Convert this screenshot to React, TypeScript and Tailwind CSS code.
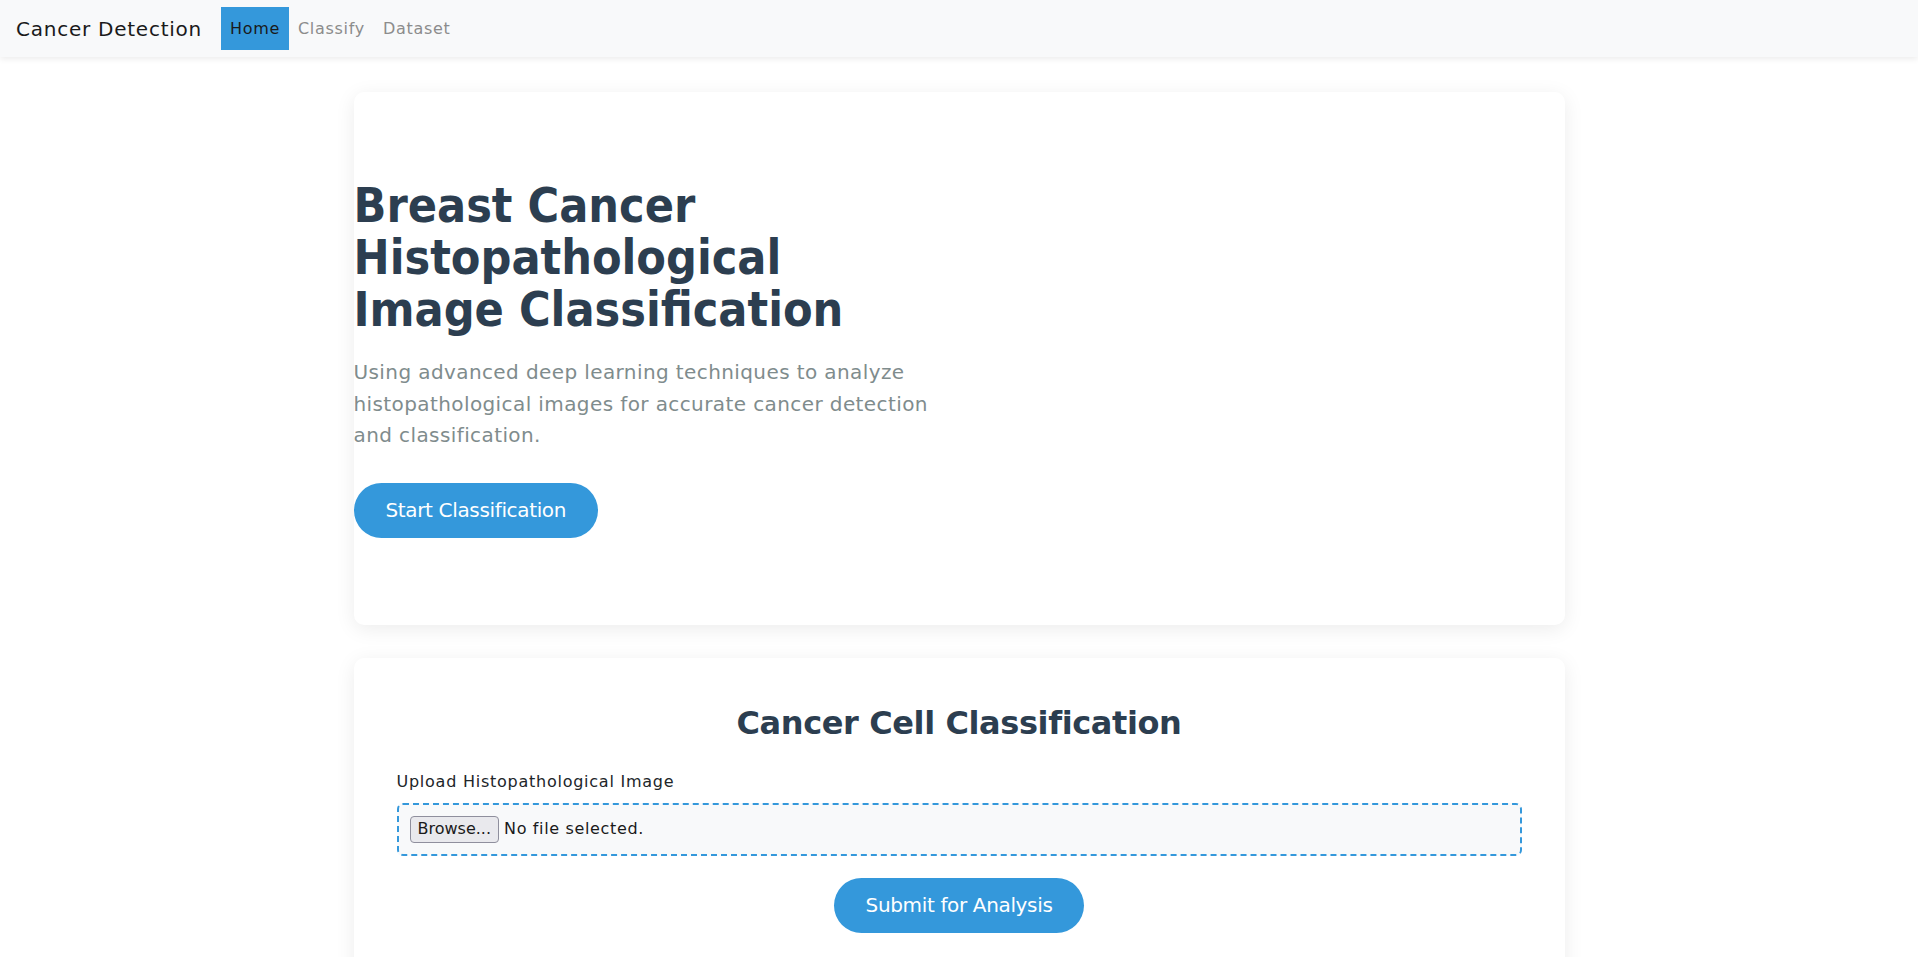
import { useState } from "react";

export default function App() {
    const [fileName, setFileName] = useState<string | null>(null);

    return (
        <div className="min-h-screen bg-white text-[#212529] font-['DejaVu_Sans',sans-serif]">
            {/* Navbar */}
            <nav className="h-[57px] bg-[#f8f9fa] shadow-[0_2px_6px_rgba(0,0,0,0.08)] flex items-center px-4">
                <a href="#" className="text-[20px] tracking-[0.75px] text-[#1a1a1a] mr-[19px]">
                    Cancer Detection
                </a>
                <div className="flex items-center text-[16px] tracking-[0.7px]">
                    <a href="#" className="h-[43px] px-[9px] flex items-center bg-[#3498db] text-[#1a1a1a]">
                        Home
                    </a>
                    <a href="#" className="h-[43px] px-[9px] flex items-center text-[#8c8c8c] hover:text-[#333]">
                        Classify
                    </a>
                    <a href="#" className="h-[43px] px-[9px] flex items-center text-[#8c8c8c] hover:text-[#333]">
                        Dataset
                    </a>
                </div>
            </nav>

            <main className="w-[1211px] mx-auto pt-[35px] flex flex-col gap-[33px]">
                {/* Hero */}
                <section className="bg-white rounded-[10px] shadow-[0_4px_20px_rgba(0,0,0,0.08)] py-[87px] flex">
                    <div className="w-[605px]">
                        <h1 className="max-w-[540px] font-['DejaVu_Sans_Condensed','DejaVu_Sans',sans-serif] text-[48px] leading-[52px] font-bold text-[#2c3e50] mb-[22px]">
                            Breast Cancer Histopathological Image Classification
                        </h1>
                        <p className="text-[20px] leading-[31.5px] tracking-[0.4px] text-[#7f8c8d] mb-[31px]">
                            Using advanced deep learning techniques to analyze histopathological images for accurate cancer detection and classification.
                        </p>
                        <button className="h-[55px] px-8 rounded-full bg-[#3498db] text-white text-[20px] tracking-[-0.35px] hover:bg-[#2980b9]">
                            Start Classification
                        </button>
                    </div>
                </section>

                {/* Classification form */}
                <section className="bg-white rounded-[10px] shadow-[0_4px_20px_rgba(0,0,0,0.08)] px-[43px] pt-[46px] pb-12">
                    <h2 className="text-[32px] leading-[38px] tracking-[-0.4px] font-bold text-[#2c3e50] text-center mb-[28px]">
                        Cancer Cell Classification
                    </h2>
                    <form onSubmit={(e) => e.preventDefault()}>
                        <label className="block text-[16px] leading-6 tracking-[0.75px] mb-[9px]">
                            Upload Histopathological Image
                        </label>
                        <label className="flex items-center gap-[5px] border-2 border-dashed border-[#3498db] bg-[#f8f9fa] rounded-[6px] px-[11px] h-[53px] cursor-pointer">
                            <input
                                type="file"
                                accept="image/*"
                                className="hidden"
                                onChange={(e) => setFileName(e.target.files?.[0]?.name ?? null)}
                            />
                            <span className="h-[27px] px-[7px] flex items-center bg-[#e9e9ed] border border-[#8f8f9d] rounded-[4px] text-[16px] text-[#1a1a1a]">
                                Browse...
                            </span>
                            <span className="text-[16px] tracking-[0.65px] text-[#1a1a1a]">{fileName ?? "No file selected."}</span>
                        </label>
                        <div className="flex justify-center mt-[22px]">
                            <button type="submit" className="h-[55px] px-8 rounded-full bg-[#3498db] text-white text-[20px] tracking-[-0.35px] hover:bg-[#2980b9]">
                                Submit for Analysis
                            </button>
                        </div>
                    </form>
                </section>
            </main>
        </div>
    );
}
